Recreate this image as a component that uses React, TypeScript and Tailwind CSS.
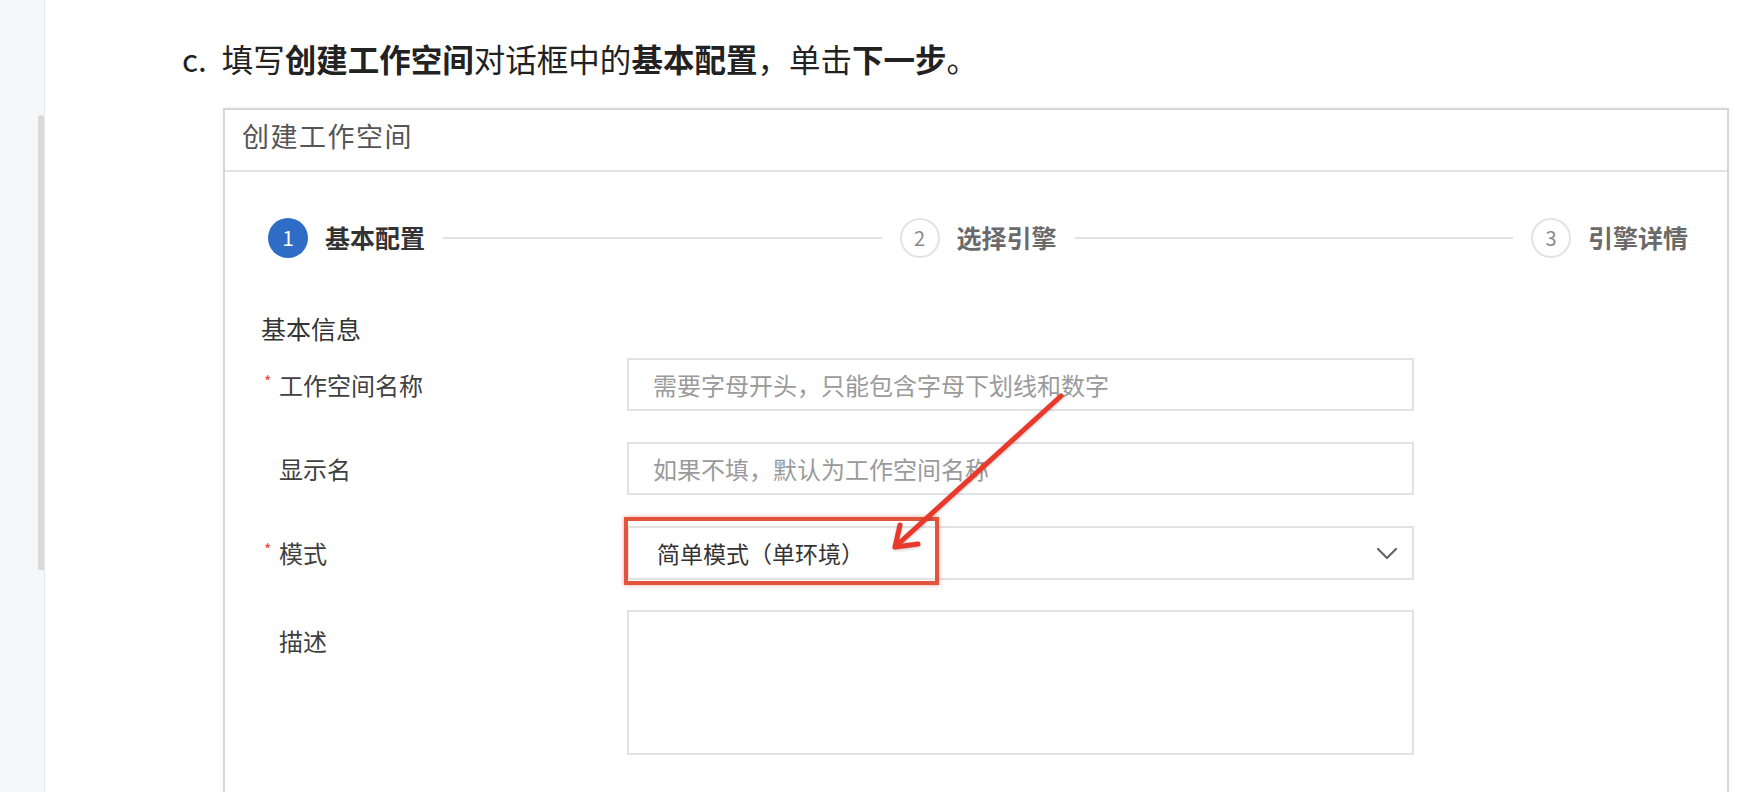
import React from "react";

const cjk = { fontFamily: '"Noto Sans CJK SC", "Noto Sans", sans-serif' };

const Step: React.FC<{ n: number; label: string; active?: boolean }> = ({ n, label, active }) => (
  <div className="flex items-center gap-[17px] shrink-0">
    {active ? (
      <div className="w-[40px] h-[40px] rounded-full bg-[#2f6cc5] text-white flex items-center justify-center text-[21px]">
        {n}
      </div>
    ) : (
      <div className="w-[40px] h-[40px] rounded-full border-2 border-[#e3e3e3] text-[#8a8a8a] flex items-center justify-center text-[20px]">
        {n}
      </div>
    )}
    <span className={`text-[25px] font-bold ${active ? "text-[#333]" : "text-[#6a6a6a]"}`}>{label}</span>
  </div>
);

const Label: React.FC<{ text: string; required?: boolean; top?: boolean }> = ({ text, required, top }) => (
  <div className={`w-[366px] shrink-0 flex pl-[3px] ${top ? "items-start pt-[14px]" : "items-center"}`}>
    <span className="w-[15px] text-[#e0503a] text-[16px] leading-none -mt-[8px]">{required ? "*" : ""}</span>
    <span className="text-[24px] leading-[34px] text-[#404040]">{text}</span>
  </div>
);

export default function App() {
  return (
    <div className="relative w-[1750px] h-[792px] overflow-hidden bg-white flex" style={cjk}>
      {/* left rail */}
      <div className="w-[45px] shrink-0 bg-[#f6f7f9] border-r border-[#e8e8e8] flex justify-end pt-[115px]">
        <div className="w-[6px] h-[455px] rounded-t-[3px] bg-[#d9d9d9]" />
      </div>

      <div className="flex-1">
        <p className="pt-[38px] pl-[137px] text-[31.5px] leading-[40px] text-[#222]">
          <span className="mr-[15px]">c.</span>填写<b>创建工作空间</b>对话框中的<b>基本配置</b>，单击<b>下一步</b>。
        </p>

        <div className="mt-[30px] ml-[178px] w-[1506px] border-2 border-[#d6d6d6] shadow-[0_0_3px_rgba(0,0,0,0.08)] bg-white">
          <div className="h-[62px] border-b-2 border-[#e2e2e2] flex items-center pl-[17px] pb-[8px]">
            <span className="text-[27px] tracking-[1.5px] text-[#555]">创建工作空间</span>
          </div>

          <div className="pb-[60px]">
            <div className="mt-[46px] pl-[43px] pr-[39px] flex items-center">
              <Step n={1} label="基本配置" active />
              <div className="flex-1 h-[2px] bg-[#e2e2e2] mx-[18px]" />
              <Step n={2} label="选择引擎" />
              <div className="flex-1 h-[2px] bg-[#e2e2e2] mx-[18px]" />
              <Step n={3} label="引擎详情" />
            </div>

            <div className="pl-[36px]">
              <div className="mt-[53px] text-[25px] leading-[34px] text-[#333]">基本信息</div>

              <div className="mt-[13px] flex flex-col gap-[31px]">
                <div className="flex h-[53px]">
                  <Label text="工作空间名称" required />
                  <div className="w-[787px] border-2 border-[#e2e2e2] flex items-center pl-[24px] text-[24px] text-[#9a9a9a]">
                    需要字母开头，只能包含字母下划线和数字
                  </div>
                </div>

                <div className="flex h-[53px]">
                  <Label text="显示名" />
                  <div className="w-[787px] border-2 border-[#e2e2e2] flex items-center pl-[24px] text-[24px] text-[#9a9a9a]">
                    如果不填，默认为工作空间名称
                  </div>
                </div>

                <div className="flex h-[54px]">
                  <Label text="模式" required />
                  <div className="relative w-[787px] border-2 border-[#e2e2e2] flex items-center justify-between pl-[28px] pr-[14px] text-[23px] text-[#333]">
                    <span>简单模式（单环境）</span>
                    <svg width="22" height="13" viewBox="0 0 22 13" fill="none">
                      <polyline points="2,2 11,11 20,2" stroke="#666" strokeWidth="2.2" strokeLinecap="round" strokeLinejoin="round" />
                    </svg>
                    <div className="absolute -left-[5px] -top-[11px] w-[315px] h-[68px] border-[4px] border-[#e2553c] shadow-[0_0_4px_rgba(226,85,60,0.55)]" />
                  </div>
                </div>

                <div className="flex h-[145px] -mt-[1px]">
                  <Label text="描述" top />
                  <div className="w-[787px] border-2 border-[#e2e2e2]" />
                </div>
              </div>
            </div>
          </div>
        </div>
      </div>

      {/* annotation arrow */}
      <svg className="absolute left-0 top-0 pointer-events-none" width="1750" height="792" viewBox="0 0 1750 792">
        <g stroke="#e8392b" strokeWidth="5" strokeLinecap="round" strokeLinejoin="round" fill="none" style={{ filter: "drop-shadow(0 1px 1.5px rgba(0,0,0,0.25))" }}>
          <line x1="1061" y1="396" x2="896" y2="546" />
          <polyline points="900,525 895,547 918,544" />
        </g>
      </svg>
    </div>
  );
}
